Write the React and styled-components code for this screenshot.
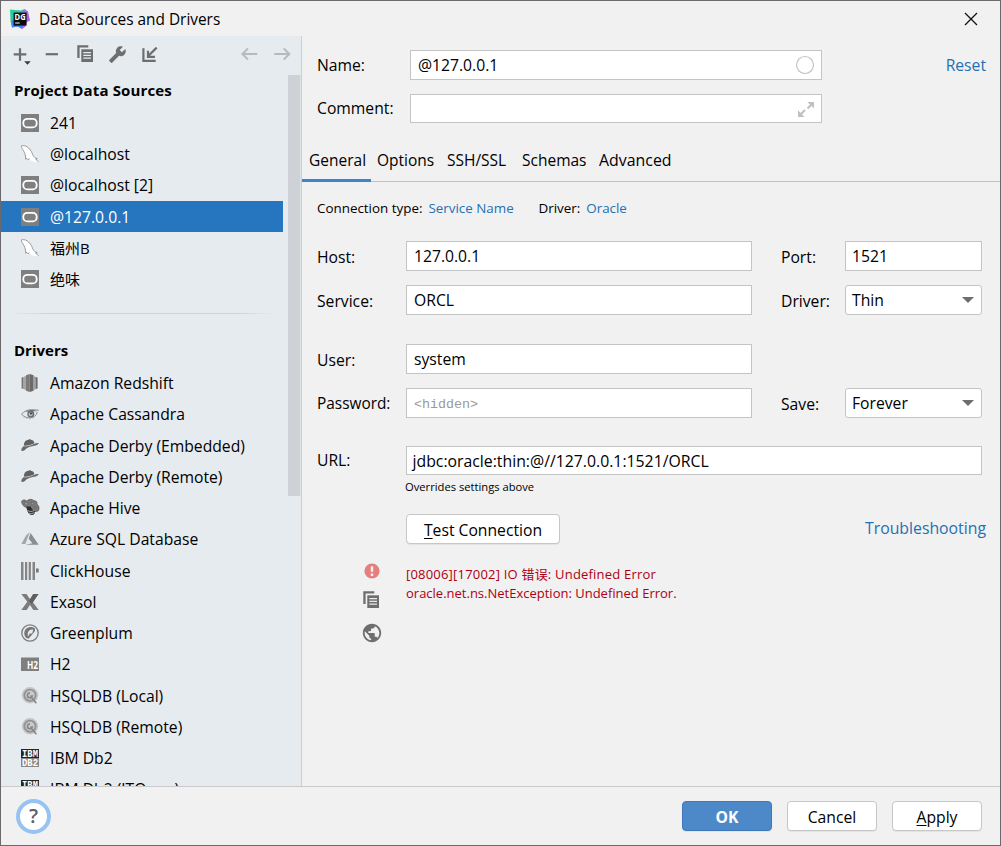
import React, { useState } from 'react';
import styled, { createGlobalStyle } from 'styled-components';

const color = {
  WINDOW: '#f1f1f1',
  SIDEBAR: '#e6ebef',
  SELECTED: '#2675bf',
  LINK: '#2470b3',
  BORDER: '#c4c4c4',
  ICON: '#6e6e6e',
  ERROR: '#ad0010',
};

const DATA_SOURCES = [
  { id: 1, icon: 'oracle', name: '241' },
  { id: 2, icon: 'mysql', name: '@localhost' },
  { id: 3, icon: 'oracle', name: '@localhost [2]' },
  { id: 4, icon: 'oracle', name: '@127.0.0.1' },
  { id: 5, icon: 'mysql', name: '福州B', cjk: true },
  { id: 6, icon: 'oracle', name: '绝味', cjk: true },
];

const DRIVERS = [
  { id: 11, icon: 'redshift', name: 'Amazon Redshift' },
  { id: 12, icon: 'cassandra', name: 'Apache Cassandra' },
  { id: 13, icon: 'derby', name: 'Apache Derby (Embedded)' },
  { id: 14, icon: 'derby', name: 'Apache Derby (Remote)' },
  { id: 15, icon: 'hive', name: 'Apache Hive' },
  { id: 16, icon: 'azure', name: 'Azure SQL Database' },
  { id: 17, icon: 'clickhouse', name: 'ClickHouse' },
  { id: 18, icon: 'exasol', name: 'Exasol' },
  { id: 19, icon: 'greenplum', name: 'Greenplum' },
  { id: 20, icon: 'h2', name: 'H2' },
  { id: 21, icon: 'hsqldb', name: 'HSQLDB (Local)' },
  { id: 22, icon: 'hsqldb', name: 'HSQLDB (Remote)' },
  { id: 23, icon: 'db2', name: 'IBM Db2' },
  { id: 24, icon: 'db2', name: 'IBM Db2 (JTOpen)' },
];

const TABS = [
  { name: 'General', width: 69 },
  { name: 'Options', width: 70 },
  { name: 'SSH/SSL', width: 75 },
  { name: 'Schemas', width: 77 },
  { name: 'Advanced', width: 86 },
];

const Icon = styled.svg`
  flex: none;
  display: block;
  width: ${props => props.$size}px;
  height: ${props => props.$size}px;
  overflow: visible;
`;

const IconText = styled.text`
  font-family: ${props => (props.$mono ? "'Liberation Mono', monospace" : "'Open Sans', sans-serif")};
  font-size: ${props => props.$size || 10}px;
  font-weight: 700;
  fill: #fff;
`;

const DB_ICONS = {
  oracle: (
    <>
      <rect width="18" height="18" fill="#7f7f7f" />
      <rect x="2.3" y="4.8" width="13.4" height="8.6" rx="4" fill="none" stroke="#fff" strokeWidth="1.8" />
    </>
  ),
  mysql: (
    <>
      <path
        d="M.5.8C3 .2 5.600 1 7.600 3c2.300 2.200 3.400 4.600 4.400 7.200.7 1.700 2.200 2.700 4.400 3.700l1.400 3.200c-3 .2-6.500-.2-8.800-2.400L8 13.200l-.8 1.600-1.500-1.600-1 1C4.200 10 3 6.500 1.800 4.600.8 3.200.2 2 .5.8z"
        fill="#fff"
      />
      <path
        d="M8.200 13.500l-.9 1.400-1.500-1.600-1.100 1C4.800 9.500 3 6.500 1.800 4.600.8 3.200.2 2 .5.800 3 .2 5.600 1 7.600 3c2.300 2.200 3.400 4.600 4.400 7.200.7 1.700 2.200 2.700 4.400 3.700l-1.800.3 3.200 2.700"
        fill="none"
        stroke="#858585"
        strokeWidth=".8"
      />
    </>
  ),
  redshift: (
    <>
      <path d="M.6 3.600 2.600 3v12l-2-.6z" fill="#767676" />
      <path d="M2.900 2.700 5 2v14l-2.100-.7z" fill="#a5a5a5" />
      <path d="M5 1.200 8.800 0v18L5 16.800z" fill="#7a7a7a" />
      <path d="M8.800 0l3.800 1.200v15.600L8.800 18z" fill="#6a6a6a" />
      <path d="M12.600 2l2 .7v12.600l-2 .7z" fill="#a0a0a0" />
      <path d="M14.600 3l2 .6v10.800l-2 .6z" fill="#6c6c6c" />
    </>
  ),
  cassandra: (
    <>
      <path
        d="M.3 9.300C3 6.500 6.500 4.600 10.500 4.700c2.600.1 5 .5 7.200.5M.8 9.400c2.500 2.600 5.500 3.700 8.700 3.500 3.200-.3 5.800-2.300 6.800-5.800"
        fill="none"
        stroke="#888"
        strokeWidth="1"
      />
      <path d="M4.500 6.800C8 4.500 13 4.800 16.500 6.300c-3-.4-9 .3-12 .5z" fill="#777" />
      <circle cx="9.800" cy="9" r="3.500" fill="#6b6b6b" />
      <circle cx="9.600" cy="9.200" r="2" fill="#b9bcbf" />
      <circle cx="10" cy="8.500" r="1.100" fill="#444" />
      <path d="M3.500 11.500l-.8 1.500M6 12.500l-.6 1.600M9 13l-.1 1.500M12 12.400l.6 1.400" stroke="#aaa" strokeWidth=".7" />
    </>
  ),
  derby: (
    <>
      <path d="M2.800 8.600C3 4.800 4.600 3 7.500 2.800c.6-.6 1.900-.6 2.400-.1 2.300.3 3.200 1.500 3.500 3.500-3.300 1.700-6.500 2.600-10.600 2.400z" fill="#616161" />
      <path d="M.3 13.500c0-1.900 1-3.400 2.300-4.200 3.800.1 7-.8 10.300-2.300 1.800-.8 3.200-1.100 4.900-.8-1.400 1.700-3.300 2.600-5.600 2.900-3.300.3-6 1.600-8.300 3.800-1.300 1-2.800 1.500-3.600.6z" fill="#6b6b6b" />
    </>
  ),
  hive: (
    <>
      <path d="M.5 2.500C2 0 4.500 1 5.800 2c2-2 5-2.200 7-.4 2.500.2 3.800 1.700 3 3.500 2.400 1.600 2.700 4.400 1.700 6.500-2.300 1.700-4.800.8-6-1.200-3.500-.1-5-.6-6.400-2C2.600 7.700 1 5.500.5 2.500z" fill="#7b7b7b" stroke="#555" strokeWidth=".7" />
      <path d="M3 2.600 7 4.300 5.200 7zM10.200 3l3 1.300-2.600 2zM12.500 7.500l3 1.500" fill="#a2a2a2" stroke="#555" strokeWidth=".5" />
      <path d="M5.500 7.600c.4 4.600 2.300 8.300 5.400 8.400 2-.2 3.500-1.700 3.200-4.500-2.600-.3-3.600-2.100-4.500-3.900z" fill="#2d2d2d" />
      <path d="M6.600 11.500c1.800 1.200 4.600 1.300 7-.2M8 14.100c1.800.7 3.800.5 5.500-.7" fill="none" stroke="#bbb" strokeWidth=".9" />
    </>
  ),
  azure: (
    <>
      <path d="M8.900 2 5 5.500.4 13.900h4z" fill="#a5a5a5" />
      <path d="M9.600 3 7.700 8.700l3.700 4.600-6.900 1.500h13.200z" fill="#8d8d8d" />
    </>
  ),
  clickhouse: (
    <>
      <path d="M0 0h2.500v18H0zM4 0h2.200v18H4zM7.700 0h2.200v18H7.700zM11.500 0h2.500v18h-2.500z" fill="#858585" />
      <path d="M15 6.500h2.700v4H15z" fill="#777" />
    </>
  ),
  exasol: (
    <>
      <path d="M.3 1h5.200l3.600 5.300L12.300 1h5.200l-5.600 8.200L17.700 17h-5.300L8.900 12.100 5.700 17H.3l6-8.300z" fill="#7c7c7c" />
      <path d="M12.300 1h5.200l-5.600 8.200-1.400 1.700-2.600-2.800z" fill="#5f5f5f" />
    </>
  ),
  greenplum: (
    <>
      <circle cx="9" cy="9" r="8.200" fill="none" stroke="#7c7c7c" strokeWidth="1.300" />
      <path d="M13.800 4.500C10.700 2.200 6.500 2.700 4.400 5.600 2.600 8 2.900 11.700 5 13.700c.7.700 2 1 3 .6l5.500-6.600c.5-1 .7-2 .3-3.200z" fill="#777" />
      <path d="M12.200 5.600C9.500 5.200 7 6.700 6.700 9.500l.2 3.300 2-3.300 2.300-.1z" fill="#e6ebef" />
    </>
  ),
  h2: (
    <>
      <rect y="2.500" width="18" height="13.500" fill="#7f7f7f" />
      <IconText x="6" y="13.800" textLength="11" lengthAdjust="spacingAndGlyphs">H2</IconText>
    </>
  ),
  hsqldb: (
    <>
      <circle cx="9" cy="8.200" r="8.200" fill="#c3c6c9" />
      <circle cx="9" cy="8.200" r="5.600" fill="#c9cccf" stroke="#929292" strokeWidth="1.800" />
      <path d="M9 5.800a2.500 2.500 0 1 0 2.300 3.300H9.200M10.800 10.800l4.500 5.500" fill="none" stroke="#888" strokeWidth="1.700" />
    </>
  ),
  db2: (
    <>
      <rect width="18" height="9" fill="#252525" />
      <rect y="9" width="18" height="9" fill="#888" />
      <IconText x="1" y="7.800" textLength="16" lengthAdjust="spacingAndGlyphs" $size={10} $mono>IBM</IconText>
      <IconText x="1" y="16.800" textLength="16" lengthAdjust="spacingAndGlyphs" $size={10} $mono>DB2</IconText>
    </>
  ),
};

const CopyIcon = () => (
  <Icon $size={20} viewBox="0 0 20 20">
    <path d="M1.300 1.300h11v2.300H3.600V14H1.300z" fill={color.ICON} />
    <path d="M5.300 5.300H17V18H5.300z" fill={color.ICON} />
    <path d="M7.300 8.700H15M7.300 11.400H15M7.300 14.100H15" stroke="#e6ebef" strokeWidth="1.200" />
  </Icon>
);

const AppLogo = () => (
  <Icon $size={20} viewBox="0 0 20 20">
    <defs>
      <linearGradient id="logo" x1="0" y1="0" x2="1" y2=".5">
        <stop offset="0" stopColor="#22d88f" />
        <stop offset=".45" stopColor="#2fc0a8" />
        <stop offset=".7" stopColor="#9a6be8" />
        <stop offset="1" stopColor="#b25cf0" />
      </linearGradient>
    </defs>
    <path d="M0 .5 11 1.500 14.500 0 18 2.500l2 9-4 2-.5 4L12 20l-4-2.500-6 1L.500 12z" fill="url(#logo)" />
    <path d="M1 11.500h3V16h9l-1 4-4-2.500-6 1z" fill="#3a8be8" />
    <rect x="3.600" y="3.600" width="13" height="13" fill="#0b0b0f" />
    <IconText x="4.600" y="10.700" textLength="11" lengthAdjust="spacingAndGlyphs" $size={8.5}>DG</IconText>
    <path d="M5.200 14h4.500" stroke="#fff" strokeWidth="1" />
  </Icon>
);

const SourceRow = ({ item, selected, onSelect }) => (
  <Row $selected={selected} onClick={() => onSelect(item.id)}>
    <Icon $size={18} viewBox="0 0 18 18">
      {DB_ICONS[item.icon]}
    </Icon>
    <RowName $cjk={item.cjk}>{item.name}</RowName>
  </Row>
);

const App = () => {
  const [selectedId, setSelectedId] = useState(4);
  const [tab, setTab] = useState('General');

  return (
    <>
      <GlobalStyle />
      <Window>
        <TitleBar>
          <AppLogo />
          <Title>Data Sources and Drivers</Title>
          <Icon $size={14} viewBox="0 0 14 14">
            <path d="M1 1l12 12M13 1L1 13" stroke="#111" strokeWidth="1.300" />
          </Icon>
        </TitleBar>

        <Body>
          <Sidebar>
            <Toolbar>
              <Icon $size={20} viewBox="0 0 20 20">
                <path d="M8 4.300v12.400M1.700 10.400h12.600" stroke={color.ICON} strokeWidth="2.200" />
                <path d="M12.200 17.300h6.500l-3.200 3.500z" fill="#3a3a3a" />
              </Icon>
              <Icon $size={20} viewBox="0 0 20 20">
                <path d="M1.700 10.200H14" stroke={color.ICON} strokeWidth="2.200" />
              </Icon>
              <CopyIcon />
              <Icon $size={20} viewBox="0 0 20 20">
                <path
                  transform="translate(18.500 1.500) scale(-.76 .76)"
                  d="M22.700 19l-9.100-9.100c.9-2.300.4-5-1.500-6.900-2-2-5-2.400-7.400-1.300L9 6 6 9 1.600 4.700C.4 7.100.9 10.100 2.900 12.100c1.900 1.900 4.600 2.400 6.900 1.500l9.100 9.100c.4.4 1 .4 1.400 0l2.300-2.300c.5-.4.5-1.100.1-1.400z"
                  fill={color.ICON}
                />
              </Icon>
              <Icon $size={20} viewBox="0 0 20 20">
                <path d="M3.400 4.300v12.500h12.300M16.700 3.600 8.500 11.800M8 6.700v6.100h7" fill="none" stroke={color.ICON} strokeWidth="2.200" />
              </Icon>
              <History>
                <Icon $size={20} viewBox="0 0 20 20">
                  <path d="M17.300 10H2.500M8 4.400 2.400 10 8 15.600" fill="none" stroke="#b7babd" strokeWidth="2" />
                </Icon>
                <Icon $size={20} viewBox="0 0 20 20">
                  <path d="M1.300 10h15M10.700 4.400l5.600 5.600-5.600 5.600" fill="none" stroke="#b7babd" strokeWidth="2" />
                </Icon>
              </History>
            </Toolbar>
            <ScrollArea>
              <List>
                <Heading $wide>Project Data Sources</Heading>
                {DATA_SOURCES.map(item => (
                  <SourceRow key={item.id} item={item} selected={item.id === selectedId} onSelect={setSelectedId} />
                ))}
                <Separator />
                <Heading>Drivers</Heading>
                {DRIVERS.map(item => (
                  <SourceRow key={item.id} item={item} selected={item.id === selectedId} onSelect={setSelectedId} />
                ))}
              </List>
              <ScrollThumb />
            </ScrollArea>
          </Sidebar>

          <Content>
            <Header>
              <HeaderRow>
                <Label>Name:</Label>
                <Field $raise>
                  <Value>@127.0.0.1</Value>
                  <Icon $size={20} viewBox="0 0 20 20">
                    <circle cx="10" cy="10" r="8.500" fill="none" stroke="#bfc4c9" strokeWidth="1.200" />
                  </Icon>
                </Field>
                <HeaderLink>Reset</HeaderLink>
              </HeaderRow>
              <HeaderRow>
                <Label>Comment:</Label>
                <Field $height={29}>
                  <Value />
                  <Icon $size={18} viewBox="0 0 18 18">
                    <path d="M10.300 2H17v6.200zM1 10.300V17h6.500z" fill="#bcc1c5" />
                    <path d="M14 5l-3.500 3.500M4 14l4-4" stroke="#bcc1c5" strokeWidth="2" />
                  </Icon>
                </Field>
              </HeaderRow>
            </Header>

            <TabBar>
              {TABS.map(({ name, width }) => (
                <Tab key={name} $width={width} $active={name === tab} onClick={() => setTab(name)}>
                  {name}
                </Tab>
              ))}
            </TabBar>

            <Connection>
              Connection type:
              <SmallLink $width={85}>Service Name</SmallLink>
              <ConnectionDriver>Driver:</ConnectionDriver>
              <SmallLink>Oracle</SmallLink>
            </Connection>

            <Form>
              <FormRow $gap={14}>
                <Label $down>Host:</Label>
                <Field $raise>
                  <Value>127.0.0.1</Value>
                </Field>
                <Label $down>Port:</Label>
                <Field $raise>
                  <Value $near>1521</Value>
                </Field>
              </FormRow>
              <FormRow $gap={29}>
                <Label $down>Service:</Label>
                <Field $raise>
                  <Value>ORCL</Value>
                </Field>
                <Label $down>Driver:</Label>
                <Select>
                  <Value $near>Thin</Value>
                  <Caret />
                </Select>
              </FormRow>
              <FormRow $gap={14}>
                <Label $down>User:</Label>
                <Field $raise>
                  <Value>system</Value>
                </Field>
              </FormRow>
              <FormRow $gap={28}>
                <Label $down $narrow>Password:</Label>
                <Field>
                  <Hidden>&lt;hidden&gt;</Hidden>
                </Field>
                <Label $down>Save:</Label>
                <Select>
                  <Value $near>Forever</Value>
                  <Caret />
                </Select>
              </FormRow>
              <UrlRow>
                <Label>URL:</Label>
                <Field $height={29}>
                  <UrlValue>jdbc:oracle:thin:@//127.0.0.1:1521/ORCL</UrlValue>
                </Field>
              </UrlRow>
              <Note>Overrides settings above</Note>
            </Form>

            <TestRow>
              <Button $width={154}>
                <span>
                  <Mnemonic>T</Mnemonic>est Connection
                </span>
              </Button>
              <TroubleLink>Troubleshooting</TroubleLink>
            </TestRow>

            <Result>
              <ResultIcons>
                <Icon $size={20} viewBox="0 0 20 20">
                  <circle cx="10" cy="10" r="7.600" fill="#e57f7f" />
                  <path d="M10 5.200v5.600M10 12.600v2.300" stroke="#f5f0f0" strokeWidth="2.400" />
                </Icon>
                <CopyIcon />
                <Icon $size={22} viewBox="0 0 24 24">
                  <path
                    d="M12 2C6.480 2 2 6.480 2 12s4.480 10 10 10 10-4.480 10-10S17.520 2 12 2zm-1 17.930c-3.950-.49-7-3.850-7-7.930 0-.62.08-1.210.21-1.790L9 15v1c0 1.100.9 2 2 2v1.930zm6.900-2.540c-.26-.81-1-1.390-1.900-1.390h-1v-3c0-.55-.45-1-1-1H8v-2h2c.55 0 1-.45 1-1V7h2c1.100 0 2-.9 2-2v-.41c2.930 1.190 5 4.060 5 7.410 0 2.080-.8 3.970-2.100 5.390z"
                    fill={color.ICON}
                  />
                </Icon>
              </ResultIcons>
              <ErrorText>
                <ErrorLine $spacing={0.2}>[08006][17002] IO 错误: Undefined Error</ErrorLine>
                <ErrorLine>oracle.net.ns.NetException: Undefined Error.</ErrorLine>
              </ErrorText>
            </Result>
          </Content>
        </Body>

        <Footer>
          <HelpButton>?</HelpButton>
          <FooterButtons>
            <Button $primary>OK</Button>
            <Button>Cancel</Button>
            <Button>
              <span>
                <Mnemonic>A</Mnemonic>pply
              </span>
            </Button>
          </FooterButtons>
        </Footer>
      </Window>
    </>
  );
};

const GlobalStyle = createGlobalStyle`
  * {
    box-sizing: border-box;
  }

  body {
    margin: 0;
    overflow: hidden;
    font-family: 'Open Sans', 'Noto Sans CJK SC', sans-serif;
    font-size: 15.7px;
    color: #000;
  }
`;

const Window = styled.div`
  display: flex;
  flex-direction: column;
  width: 1001px;
  height: 846px;
  border: 1px solid #6b696b;
  background: ${color.WINDOW};
`;

const TitleBar = styled.div`
  display: flex;
  align-items: center;
  height: 35px;
  padding: 1px 22px 0 9px;
`;

const Title = styled.div`
  flex: 1;
  padding-left: 9px;
  font-size: 15.4px;
`;

const Body = styled.div`
  display: flex;
  height: 750px;
`;

const Sidebar = styled.div`
  display: flex;
  flex-direction: column;
  width: 301px;
  border-right: 1px solid #cdd0d3;
  background: ${color.SIDEBAR};
`;

const Toolbar = styled.div`
  display: flex;
  flex: none;
  gap: 12px;
  height: 39px;
  padding: 8px 8px 0 11px;
`;

const History = styled.div`
  display: flex;
  gap: 13px;
  margin-left: auto;
`;

const ScrollArea = styled.div`
  display: flex;
  flex: 1;
  justify-content: space-between;
  min-height: 0;
  overflow: hidden;
`;

const List = styled.div`
  width: 282px;
`;

const ScrollThumb = styled.div`
  width: 13px;
  height: 421px;
  background: #ced2d7;
  border-right: 1px solid #dde1e5;
`;

const Heading = styled.div`
  height: 32.3px;
  padding-left: 13px;
  font-size: 15px;
  font-weight: 700;
  letter-spacing: ${props => (props.$wide ? 0.15 : 0)}px;
  line-height: 30px;
`;

const Row = styled.div`
  display: flex;
  align-items: center;
  height: 31.25px;
  padding-left: 20px;
  color: ${props => (props.$selected ? '#fff' : '#000')};
  background: ${props => (props.$selected ? color.SELECTED : 'transparent')};
`;

const RowName = styled.span`
  padding-left: 11px;
  font-size: ${props => (props.$cjk ? 15 : 15.7)}px;
  line-height: 22px;
  white-space: nowrap;
`;

const Separator = styled.div`
  height: 1px;
  margin: 18px 6px 21.5px 8px;
  background: linear-gradient(90deg, transparent, #cfd3d6 15%, #cfd3d6 85%, transparent);
`;

const Content = styled.div`
  display: flex;
  flex: 1;
  flex-direction: column;
`;

const Header = styled.div`
  display: flex;
  flex-direction: column;
  gap: 14px;
  height: 104px;
  padding: 14px 14px 0 15px;
`;

const HeaderRow = styled.div`
  display: grid;
  grid-template-columns: 93px 412px 1fr;
  align-items: center;
`;

const Label = styled.div`
  padding-top: ${props => (props.$down ? 1 : 0)}px;
  padding-bottom: ${props => (props.$down ? 0 : 1)}px;
  font-size: ${props => (props.$narrow ? 15.4 : 15.7)}px;
  white-space: nowrap;
`;

const Field = styled.div`
  display: flex;
  align-items: center;
  height: ${props => props.$height || 30}px;
  padding: 0 6px 0 7px;
  padding-bottom: ${props => (props.$raise ? 1 : 0)}px;
  border: 1px solid ${color.BORDER};
  background: #fff;
`;

const Value = styled.span`
  flex: 1;
  margin-left: ${props => (props.$near ? -1 : 0)}px;
`;

const UrlValue = styled.span`
  margin-left: -1.5px;
  font-size: 15.8px;
`;

const Hidden = styled.span`
  padding-top: 2px;
  font-family: 'Liberation Mono', monospace;
  font-size: 13.33px;
  color: #999;
`;

const Link = styled.a`
  color: ${color.LINK};
  cursor: pointer;
`;

const HeaderLink = styled(Link)`
  text-align: right;
`;

const TroubleLink = styled(Link)`
  padding-bottom: 2px;
  font-size: 15.8px;
`;

const TabBar = styled.div`
  display: flex;
  height: 42px;
  border-bottom: 1px solid #c0c2c4;
`;

const Tab = styled.div`
  width: ${props => props.$width}px;
  height: 42px;
  padding-left: 7px;
  line-height: 41px;
  font-size: 15.5px;
  box-shadow: ${props => (props.$active ? 'inset 0 -3px #4083c9' : 'none')};

  &:not(:first-child) {
    padding-left: 6px;
  }

  &:last-child {
    font-size: 15.9px;
  }
`;

const Connection = styled.div`
  display: flex;
  align-items: center;
  height: 54px;
  padding: 0 0 2px 15px;
  font-size: 13.4px;
`;

const SmallLink = styled(Link)`
  width: ${props => (props.$width ? `${props.$width}px` : 'auto')};
  margin-left: 6px;
  white-space: nowrap;
`;

const ConnectionDriver = styled.span`
  margin-left: 25px;
`;

const Form = styled.div`
  padding: 5px 18px 0 15px;
`;

const FormRow = styled.div`
  display: grid;
  grid-template-columns: 89px 346px 93px 137px;
  align-items: center;
  margin-bottom: ${props => props.$gap}px;

  > :nth-child(3) {
    margin-left: 29px;
  }
`;

const UrlRow = styled.div`
  display: grid;
  grid-template-columns: 89px 1fr;
  align-items: center;
`;

const Select = styled.div`
  display: flex;
  align-items: center;
  height: 30px;
  padding: 0 7px;
  border: 1px solid ${color.BORDER};
  border-radius: 3px;
  background: #fff;
`;

const Caret = styled.i`
  border-top: 6px solid ${color.ICON};
  border-right: 6px solid transparent;
  border-left: 6px solid transparent;
`;

const Note = styled.div`
  padding: 4px 0 0 88px;
  font-size: 11.2px;
  line-height: 16px;
`;

const TestRow = styled.div`
  display: flex;
  align-items: center;
  justify-content: space-between;
  margin-top: 19px;
  padding: 0 14px 0 104px;
`;

const Button = styled.button`
  width: ${props => props.$width || 90}px;
  height: 30px;
  padding: 1px 0 0;
  border: 1px solid ${props => (props.$primary ? '#3f79bb' : '#c7c7c7')};
  border-radius: 4px;
  font-family: inherit;
  font-size: 15.7px;
  font-weight: ${props => (props.$primary ? 700 : 400)};
  color: ${props => (props.$primary ? '#fff' : '#000')};
  background: ${props => (props.$primary ? '#4d89c8' : '#fff')};
  box-shadow: 0 1px 1px rgba(0, 0, 0, 0.06);
`;

const Mnemonic = styled.span`
  text-decoration: underline;
  text-decoration-thickness: 1px;
  text-underline-offset: 2px;
`;

const Result = styled.div`
  display: flex;
  padding: 17px 0 0 59px;
`;

const ResultIcons = styled.div`
  display: flex;
  flex-direction: column;
  align-items: center;
  gap: 9px;
  width: 22px;

  > :last-child {
    margin-top: 3px;
  }
`;

const ErrorText = styled.div`
  padding: 4px 0 0 23px;
  font-size: 13px;
  color: ${color.ERROR};
`;

const ErrorLine = styled.div`
  letter-spacing: ${props => props.$spacing || 0}px;
  line-height: 19px;
`;

const Footer = styled.div`
  display: flex;
  align-items: center;
  justify-content: space-between;
  height: 59px;
  padding: 0 18px 0 15px;
  border-top: 1px solid #cacaca;
`;

const HelpButton = styled.button`
  width: 35px;
  height: 35px;
  padding: 0;
  border: 4px solid #97c3f3;
  border-radius: 50%;
  font-family: inherit;
  font-size: 20px;
  font-weight: 600;
  line-height: 26px;
  color: #5f5f5f;
  background: #fff;
`;

const FooterButtons = styled.div`
  display: flex;
  gap: 15px;
`;

export default App;
